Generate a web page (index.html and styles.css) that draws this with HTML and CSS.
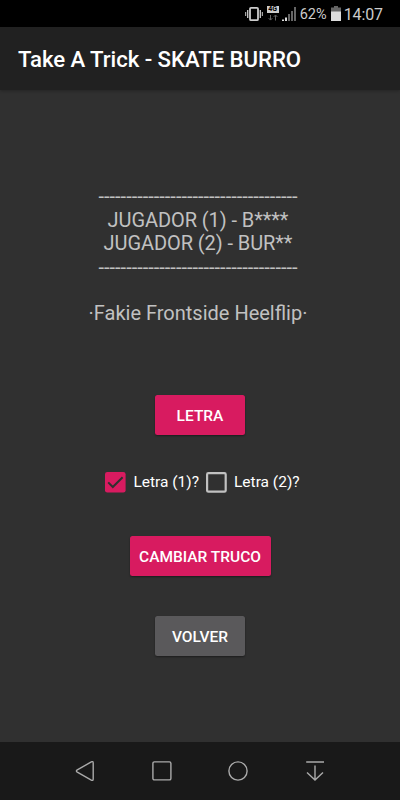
FILE: index.html
```
<!DOCTYPE html>
<html lang="es">
<head>
    <meta charset="UTF-8">
    <meta name="viewport" content="width=device-width, initial-scale=1.0">
    <title>Take A Trick - SKATE BURRO</title>
    <link rel="stylesheet" href="styles.css">
</head>
<body>
    <div class="status-bar">
        <svg class="vibrate" width="18" height="16" viewBox="0 0 18 16" fill="none" stroke="#ccc">
            <rect x="5" y="1.8" width="8" height="12.4" rx="1" stroke-width="1.8"/>
            <path d="M2.7 4v8M15.3 4v8" stroke-width="1.3"/>
            <path d="M.7 6v4M17.3 6v4" stroke-width="1"/>
        </svg>
        <div class="network">
            <span class="network-type">4G</span>
            <svg width="10" height="7" viewBox="0 0 10 7" fill="none" stroke="#666">
                <path d="M2.5 1v5M.7 4.2l1.8 1.9 1.8-1.9M7.5 6.5v-5M5.7 2.9l1.8-1.9 1.8 1.9"/>
            </svg>
        </div>
        <svg class="signal" width="14" height="14" viewBox="0 0 14 14">
            <path fill="#ddd" d="M0 12.5h2V14H0zM3 10.5h2V14H3z"/>
            <path fill="#666" d="M6 7h2v7H6zM9 4h2v10H9zM12 0h2v14h-2z"/>
        </svg>
        <span class="percent">62%</span>
        <svg class="battery" width="10" height="15" viewBox="0 0 10 15">
            <path fill="#666" d="M3 0h4v1.5h3V6H0V1.5h3z"/>
            <path fill="#ddd" d="M0 5.5h10V15H0z"/>
        </svg>
        <span class="clock">14:07</span>
    </div>

    <header>
        <h1>Take A Trick - SKATE BURRO</h1>
    </header>

    <main>
        <div class="score">
            <div>------------------------------------</div>
            <div class="player">JUGADOR (1) - B****</div>
            <div class="player">JUGADOR (2) - BUR**</div>
            <div>------------------------------------</div>
        </div>
        <div class="trick">·Fakie Frontside Heelflip·</div>

        <button class="btn btn-letter">LETRA</button>

        <div class="checks">
            <label class="check">
                <svg width="21" height="21" viewBox="0 0 21 21">
                    <rect width="20.6" height="20.6" rx="2.3" fill="#d81b60"/>
                    <path d="M3.2 10.4l4.6 4.6L17.6 5.3" fill="none" stroke="#303030" stroke-width="2"/>
                </svg>
                <span>Letra (1)?</span>
            </label>
            <label class="check">
                <svg width="21" height="21" viewBox="0 0 21 21">
                    <rect x="1.1" y="1.1" width="18.6" height="18.6" rx="1.3" fill="none" stroke="#c1c1c1" stroke-width="2.2"/>
                </svg>
                <span>Letra (2)?</span>
            </label>
        </div>

        <button class="btn btn-change">CAMBIAR TRUCO</button>
        <button class="btn btn-back">VOLVER</button>
    </main>

    <nav class="nav-bar">
        <svg width="20" height="20" viewBox="0 0 20 20">
            <path d="M16.3 .9Q18.2 0 18.2 2V18Q18.2 20 16.3 19.1L2.3 11.2Q.5 10 2.3 8.8Z"/>
        </svg>
        <svg width="20" height="20" viewBox="0 0 20 20">
            <rect x=".9" y=".9" width="18" height="18" rx="1.5"/>
        </svg>
        <svg width="20" height="20" viewBox="0 0 20 20">
            <circle cx="10" cy="10" r="9.1"/>
        </svg>
        <svg width="20" height="20" viewBox="0 0 20 20">
            <path d="M1.2 1h17.8M10 4.5v14M2 11.5l8 7.5 8-7.5"/>
        </svg>
    </nav>
</body>
</html>
```

FILE: styles.css
```
body {
    font-family: Roboto, "Liberation Sans", sans-serif;
    margin: 0;
    height: 800px;
    display: flex;
    flex-direction: column;
    background-color: #303030;
    color: white;
}
.status-bar {
    box-sizing: border-box;
    height: 27px;
    padding-right: 17px;
    display: flex;
    justify-content: flex-end;
    align-items: center;
    background-color: #000;
    color: #ccc;
}
.network {
    display: flex;
    flex-direction: column;
    align-items: center;
    gap: 1px;
    margin: 0 3px 0 4px;
}
.network-type {
    width: 12px;
    height: 7px;
    background-color: #ccc;
    color: #000;
    font-size: 7px;
    font-weight: bold;
    line-height: 7px;
    text-align: center;
}
.percent {
    margin: 1px 4px 0 4px;
    font-size: 14.5px;
}
.clock {
    margin: 1px 0 0 3px;
    font-size: 16px;
    letter-spacing: -0.1px;
}
header {
    position: relative;
    box-sizing: border-box;
    height: 63px;
    padding: 0 18px;
    display: flex;
    align-items: center;
    background-color: #212121;
    box-shadow: 0 1px 3px rgba(0,0,0,0.25);
}
h1 {
    margin: 0;
    font-size: 22.2px;
    font-weight: 500;
    letter-spacing: -0.06px;
}
main {
    flex: 1;
    display: flex;
    flex-direction: column;
    align-items: center;
    padding-top: 95.4px;
}
.score, .trick {
    padding-right: 4px;
    font-size: 20px;
    line-height: 23.4px;
    text-align: center;
    color: #c1c1c1;
}
.player {
    letter-spacing: -0.08px;
}
.trick {
    margin: 23px 0 69.6px;
}
.btn {
    height: 40px;
    padding: 2px 0 0;
    border: none;
    border-radius: 2.5px;
    box-shadow: 0 1px 2px rgba(0,0,0,0.4);
    background-color: #d81b60;
    color: white;
    font-family: inherit;
    font-size: 15.5px;
    font-weight: 500;
}
.btn-letter, .btn-back {
    width: 90px;
}
.btn-change {
    width: 141px;
    margin-bottom: 40px;
}
.btn-back {
    background-color: #5a595b;
}
.checks {
    display: flex;
    gap: 7px;
    margin: 36px 0 43px 5px;
}
.check {
    display: flex;
    align-items: center;
    gap: 7px;
    font-size: 15.5px;
    line-height: 21px;
}
.check span {
    padding-top: 1px;
}
.nav-bar {
    box-sizing: border-box;
    height: 58px;
    padding: 0 75px;
    display: flex;
    justify-content: space-between;
    align-items: center;
    background-color: #191919;
}
.nav-bar svg {
    fill: none;
    stroke: #aaa;
    stroke-width: 1.4;
}
```
